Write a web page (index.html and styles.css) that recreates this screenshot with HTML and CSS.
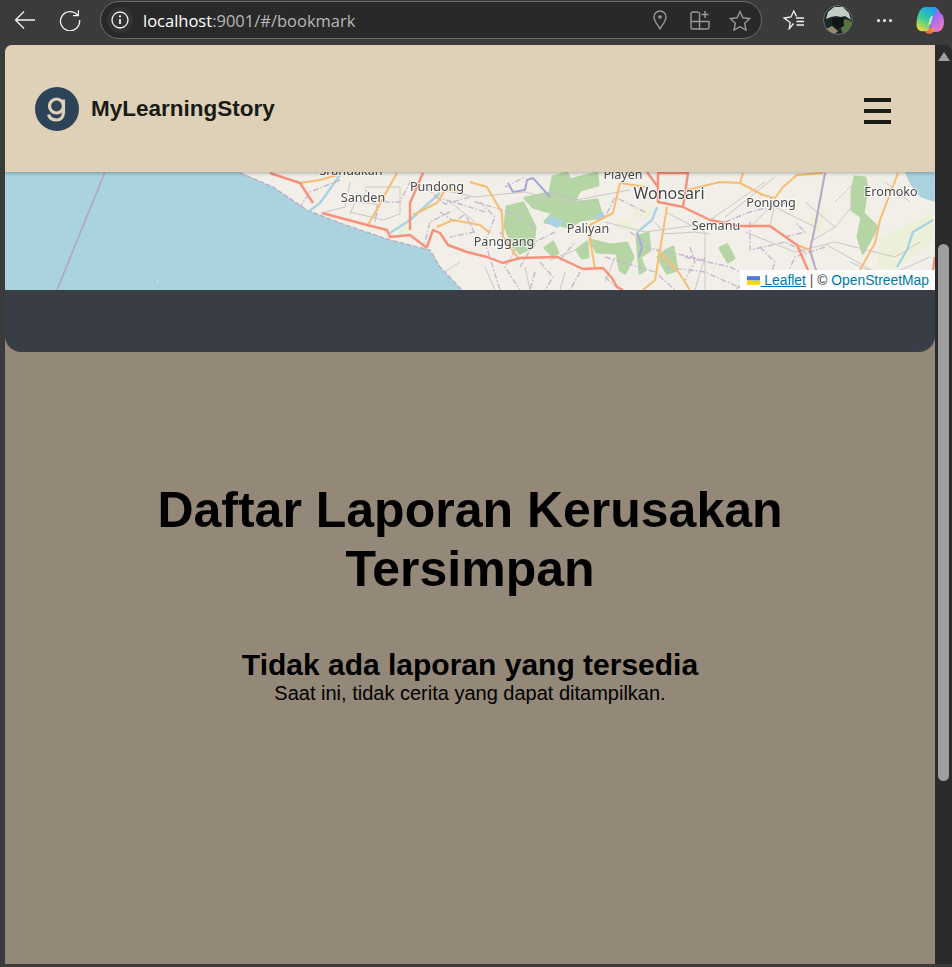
FILE: index.html
```html
<!DOCTYPE html>
<html lang="id">
<head>
    <meta charset="UTF-8">
    <meta name="viewport" content="width=device-width, initial-scale=1.0">
    <title>MyLearningStory</title>
    <link rel="stylesheet" href="styles.css">
</head>
<body>
    <div class="toolbar">
        <div class="tool back">
            <svg width="22" height="20" viewBox="0 0 22 20"><path d="M21 10H1.5M10 1.5 1.5 10l8.5 8.5" class="ico-white"/></svg>
        </div>
        <div class="tool reload">
            <svg width="22" height="22" viewBox="0 0 22 22"><path d="M18.6 6.2A9.6 9.6 0 1 0 20.6 11M19.4 1.2v5.4h-5.4" class="ico-white"/></svg>
        </div>
        <div class="urlbar">
            <div class="info">
                <svg width="18" height="18" viewBox="0 0 18 18"><circle cx="9" cy="9" r="8" class="ico-white"/><path d="M9 8v5" class="ico-white ico-thick"/><circle cx="9" cy="5.3" r="1.1" fill="#fff"/></svg>
            </div>
            <span class="url"><span class="host">localhost</span>:9001/#/bookmark</span>
            <div class="url-icons">
                <div class="url-icon">
                    <svg width="14" height="20" viewBox="0 0 14 20"><path d="M7 18.8C4 14 1 11 1 7a6 6 0 0 1 12 0c0 4-3 7-6 11.8z" class="ico-grey"/><circle cx="7" cy="7" r="1.8" fill="#9a9a9a"/></svg>
                </div>
                <div class="url-icon">
                    <svg width="20" height="20" viewBox="0 0 20 20"><path d="M8.5 2H2.8A1.8 1.8 0 0 0 1 3.800V17.200A1.800 1.800 0 0 0 2.800 19h14.400a1.800 1.800 0 0 0 1.800-1.800V11.500H1M9.500 2v17" class="ico-grey"/><path d="M15 1v7M11.500 4.500h7" class="ico-grey"/></svg>
                </div>
                <div class="url-icon">
                    <svg width="22" height="21" viewBox="0 0 22 21"><path d="m11 1.500 2.900 6.300 6.800.8-5 4.700 1.300 6.800-6-3.400-6 3.400 1.300-6.800-5-4.700 6.800-.8z" class="ico-grey"/></svg>
                </div>
            </div>
        </div>
        <div class="tool favs">
            <svg width="22" height="20" viewBox="0 0 22 20"><path d="M10.500 13.500 6.200 18.800l1-6.300-6-4.500 6.800-1L10.800 1l2.800 5.500" class="ico-white"/><path d="M13 8h8M13.500 11.500H21M13.500 15H21" class="ico-white"/></svg>
        </div>
        <div class="tool avatar-wrap">
            <svg class="avatar" width="30" height="30" viewBox="0 0 30 30">
                <circle cx="15" cy="15" r="15" fill="#1d2626"/>
                <path d="M22 14l6 2 1 3-4 7-5 3-3-8z" fill="#56743f"/>
                <path d="M3 14 5 7l6-5 9 0 6 6 2 7-6-4-4 1-5-1-5 1z" fill="#c3cbc5"/>
                <path d="M9 13l11 0 1 8-6 3-5-3z" fill="#0e1418"/>
                <path d="M3 24l6-3 6 5-3 3-5-2z" fill="#97896f"/>
                <circle cx="15" cy="15" r="14.500" fill="none" stroke="#6d7373"/>
            </svg>
        </div>
        <div class="tool dots"><span></span><span></span><span></span></div>
        <div class="tool copilot">
            <svg width="28" height="28" viewBox="0 0 28 28">
                <defs>
                    <linearGradient id="cpA" x1="0.7" y1="0" x2="0.2" y2="1"><stop offset="0" stop-color="#1f9ff0"/><stop offset=".5" stop-color="#35cc9a"/><stop offset="1" stop-color="#f4d93a"/></linearGradient>
                    <linearGradient id="cpB" x1="0.2" y1="0" x2="0.8" y2="1"><stop offset="0" stop-color="#3f7ef0"/><stop offset=".45" stop-color="#ae6bee"/><stop offset="1" stop-color="#f47bb4"/></linearGradient>
                    <linearGradient id="cpC" x1="0" y1="0" x2="1" y2="0"><stop offset="0" stop-color="#f0483c"/><stop offset="1" stop-color="#f79a4c"/></linearGradient>
                </defs>
                <path d="M15 1h3c3 0 5 3 6 6 3 1 4 5 4 9 0 6-3 10-8 10h-6z" fill="url(#cpB)"/>
                <path d="M9 22h10l-2 4c-.8 1.200-2 1.800-3.500 1.800H12c-2 0-3.500-1.800-3-5.800z" fill="url(#cpC)"/>
                <path d="M9 1h9c1.800 0 2.500 1 2 2.500L13 23c-.6 1.500-2 2.200-3.500 2.200H6c-3.500 0-5.500-3-5.500-7C.5 10 4 1 9 1z" fill="url(#cpA)"/>
                <path d="M17 9.500 14.500 18l-2.500 1 2.300-8z" fill="#fbe9e0" opacity=".8"/>
            </svg>
        </div>
    </div>

    <div class="window">
        <div class="page">
            <header class="app-bar">
                <div class="brand">
                    <svg class="logo" width="44" height="44" viewBox="0 0 44 44">
                        <circle cx="22" cy="22" r="22" fill="#2d4358"/>
                        <circle cx="21.500" cy="19" r="7" class="logo-line"/>
                        <path d="M28.500 12.500v13M13.500 27.500c1 3.500 4 5.500 8 5.500s6.700-2.500 7-7.500" class="logo-line"/>
                    </svg>
                    <span class="brand-name">MyLearningStory</span>
                </div>
                <button class="menu" aria-label="Menu"><span></span><span></span><span></span></button>
            </header>

            <section class="hero">
                <div class="map">
                    <svg class="map-tiles" width="930" height="118" viewBox="0 0 930 118">
                        <rect width="930" height="118" fill="#f2efe9"/>
                        <path d="M0 0H235L268 15 302 38 335 51 385 68 425 78 435 95 457 118H0z" fill="#aad3df"/>
                        <path d="M100 0 52 118" class="border"/>
                        <path d="M235 1 268 15 302 38 335 51 385 68 425 78 435 95 457 118" class="coast"/>
                        <rect x="152" y="109" width="1" height="1" fill="#fff"/>

                        <!-- lahan -->
                        <path d="M392 55 405 52 405 62 392 63zM628 36 648 34 645 45 630 46zM612 48 628 47 628 58 614 58zM875 65 928 40 928 70 890 98 872 95z" class="forest-light"/>
                        <path d="M805 45 822 36 815 58 806 60z" class="forest-light"/>

                        <!-- hutan -->
                        <path d="M502 35 518 31 530 55 528 75 515 81 508 73 500 55z" class="forest"/>
                        <path d="M548 5 562 1 565 8 592 1 593 13 575 18 568 31 592 28 595 38 598 45 575 48 565 55 540 50 548 41 528 35 520 26 545 21z" class="forest"/>
                        <path d="M585 68 605 73 622 71 628 85 620 101 615 98 612 81 592 80z" class="forest"/>
                        <path d="M540 76 548 70 553 81 547 83z" class="forest"/>
                        <path d="M572 78 582 70 583 85 577 86z" class="forest"/>
                        <path d="M632 65 643 61 645 78 635 85 640 98 635 101z" class="forest"/>
                        <path d="M662 78 668 75 672 98 662 101 653 85z" class="forest"/>
                        <path d="M715 76 722 73 729 86 723 90z" class="forest"/>
                        <path d="M850 5 860 6 862 18 858 41 872 55 865 68 858 81 853 65 857 45 847 38 847 18z" class="forest"/>

                        <!-- air -->
                        <path d="M900 0H930V30L915 25 905 12z" fill="#aad3df"/>
                        <path d="M540 50 552 56 560 50 545 44zM590 44 598 40 600 46 592 50z" fill="#a9d3e2"/>
                        <path d="M335 3 315 31 303 40M435 21 405 48 385 61M652 35 647 48 635 58 632 61M928 48 908 60 902 78 892 95" class="river"/>
                        <path d="M503 11 508 20 520 18 522 8 528 6 537 16 545 25M632 61 637 75 634 85" class="river-deep"/>

                        <!-- jalan kecil -->
                        <path d="M345 10 340 35 320 40M360 15 395 15 395 42 378 48 345 40M345 42 350 30 372 32 370 50M410 12 470 25 520 20 560 30 625 18M445 30 470 50M520 95 525 118M560 100 555 118M600 50 640 60 700 52M660 40 700 60 700 118M705 48 760 10M720 45 770 5M740 60 790 80 830 70 890 85 915 70M770 30 745 55M800 30 830 55 805 70M820 72 870 100M545 88 590 70M440 100 455 90M770 35 810 55M830 30 850 10M830 55 855 25M845 90 880 105 925 85M480 95 490 118M600 110 610 85M650 50 660 62 690 60 705 62M700 85 690 118M765 54 770 30M880 10 905 30" class="road-minor"/>
                        <!-- batas wilayah -->
                        <path d="M335 8 305 20 295 35M360 18 375 30 395 30 405 10M375 30 370 48M430 25 455 32 480 40M445 40 425 50 420 70M470 60 445 65M475 30 490 45 480 70 495 118M530 100 525 118M555 88 570 70M575 100 565 118M600 105 615 118M640 40 610 25 600 45M625 60 640 70M660 95 700 100 740 118M720 50 745 40 785 30M745 50 745 78 780 70 800 80M820 75 790 85 775 118M500 15 520 5M545 20 580 30M680 85 725 95M470 30 505 40 530 55M435 40 450 50 460 42 470 62M420 15 440 32 465 25M495 60 510 78 500 95 515 118M535 90 548 105 540 118M600 85 650 100 670 118M640 75 700 88M755 75 770 90 760 118M780 65 800 60 790 50M685 75 690 90 680 108M725 95 745 105 730 118M550 60 530 70 515 95" class="admin"/>
                        <path d="M820 1 810 55 805 78 810 95 818 117" class="admin-wide"/>

                        <!-- jalan provinsi -->
                        <path d="M295 11 315 8 332 3M392 1 363 53M408 43 432 31 442 15 455 20M432 55 448 48 475 53 485 61M465 10 482 15 497 41 498 65 513 86M615 11 608 41 585 53 585 68 590 96M662 35 650 108 638 118M652 78 672 98 685 118M682 18 715 10 735 11 758 23 770 26 778 15 792 3 818 1M738 1 735 11M893 1 875 48 870 71 855 98M792 73 805 78M615 11 640 15" class="road-yellow"/>
                        <!-- jalan utama -->
                        <path d="M265 1 295 11 308 31M317 41 362 53 382 58 385 65 405 63 422 76M405 58 405 31 418 1M422 75 428 58 435 61 443 73 462 80 482 85 498 91 515 86 552 85 578 97 598 96 607 106 612 115 618 118M642 0 653 15 653 30 678 35 705 48 735 54 765 54 792 73 803 98 805 117M653 15 653 1 683 1 678 35M930 85 925 118" class="road-main"/>

                        <text x="346" y="3" class="label">Srandakan</text>
                        <text x="358" y="30" class="label">Sanden</text>
                        <text x="432" y="19" class="label">Pundong</text>
                        <text x="618" y="7" class="label">Playen</text>
                        <text x="664" y="27" class="label label-big">Wonosari</text>
                        <text x="766" y="35" class="label">Ponjong</text>
                        <text x="711" y="58" class="label">Semanu</text>
                        <text x="583" y="61" class="label">Paliyan</text>
                        <text x="499" y="74" class="label">Panggang</text>
                        <text x="886" y="24" class="label">Eromoko</text>
                    </svg>
                    <div class="attribution">
                        <a href="#"><svg class="flag" width="13" height="9" viewBox="0 0 12 8"><rect width="12" height="4" fill="#4c7be1"/><rect y="4" width="12" height="4" fill="#ffd500"/></svg> Leaflet</a>
                        <span class="sep">|</span> © <a href="#" class="plain">OpenStreetMap</a>
                    </div>
                </div>
                <div class="hero-foot"></div>
            </section>

            <main class="content">
                <h1>Daftar Laporan Kerusakan Tersimpan</h1>
                <h2>Tidak ada laporan yang tersedia</h2>
                <p>Saat ini, tidak cerita yang dapat ditampilkan.</p>
            </main>
        </div>

        <div class="scrollbar">
            <div class="scroll-up"></div>
            <div class="scroll-thumb"></div>
        </div>
    </div>
</body>
</html>
```

FILE: styles.css
```css
* {
    box-sizing: border-box;
}
html, body {
    margin: 0;
    height: 100%;
}
body {
    display: flex;
    flex-direction: column;
    height: 967px;
    overflow: hidden;
    background-color: #3b3b3b;
    font-family: "Liberation Sans", Arial, sans-serif;
    color: #000;
}

/* browser */
.toolbar {
    display: flex;
    align-items: stretch;
    height: 45px;
    padding: 1px 0 6px;
    flex: none;
}
.tool {
    display: flex;
    align-items: center;
    justify-content: center;
    flex: none;
}
.back { width: 50px; }
.reload { width: 40px; }
.favs { width: 44px; margin-left: 10px; }
.avatar-wrap { width: 44px; }
.dots { width: 48px; gap: 3px; }
.copilot { width: 44px; }
.dots span {
    width: 3px;
    height: 3px;
    border-radius: 50%;
    background-color: #fff;
}
.avatar {
    margin-top: -1px;
    filter: blur(0.4px);
}
.ico-white, .ico-grey {
    fill: none;
    stroke: #f2f2f2;
    stroke-width: 1.3;
}
.ico-grey {
    stroke: #9a9a9a;
    stroke-width: 1.4;
}
.ico-thick {
    stroke-width: 1.8;
}
.urlbar {
    display: flex;
    align-items: center;
    width: 662px;
    margin-left: 10px;
    padding: 0 1px 0 6px;
    background-color: #292929;
    border: 1px solid #6a6a6a;
    border-radius: 19px;
}
.info {
    display: flex;
    align-items: center;
    justify-content: center;
    width: 26px;
    height: 26px;
    background-color: #333;
    border-radius: 50%;
}
.url {
    margin-left: 10px;
    font-family: "Open Sans", sans-serif;
    font-size: 16.5px;
    color: #b8b8b8;
}
.host {
    color: #fff;
}
.url-icons {
    display: flex;
    margin-left: auto;
}
.url-icon {
    display: flex;
    align-items: center;
    justify-content: center;
    width: 40px;
}

.window {
    display: flex;
    flex: 1;
    min-height: 0;
    padding: 0 0 3px 5px;
}
.page {
    flex: 1;
    min-width: 0;
    background-color: #948979;
    border-top-left-radius: 7px;
    overflow: hidden;
}
.scrollbar {
    display: flex;
    flex-direction: column;
    align-items: center;
    width: 17px;
    background-color: #2b2b2b;
    border-top-right-radius: 7px;
}
.scroll-up {
    width: 0;
    height: 0;
    margin-top: 7px;
    border-left: 6px solid transparent;
    border-right: 6px solid transparent;
    border-bottom: 9px solid #a0a0a0;
}
.scroll-thumb {
    width: 11px;
    height: 537px;
    margin-top: 183px;
    background-color: #9f9f9f;
    border-radius: 6px;
}

/* app */
.app-bar {
    position: relative;
    z-index: 2;
    display: flex;
    align-items: center;
    justify-content: space-between;
    height: 127px;
    padding: 0 44px 0 30px;
    background-color: #dfd0b8;
    box-shadow: 0 1px 4px rgba(0, 0, 0, 0.3);
}
.brand {
    display: flex;
    align-items: center;
    gap: 12px;
}
.logo {
    display: block;
}
.logo-line {
    fill: none;
    stroke: #dfd0b8;
    stroke-width: 3.2;
}
.brand-name {
    font-size: 22.5px;
    font-weight: bold;
    color: #181c14;
}
.menu {
    display: flex;
    flex-direction: column;
    gap: 7px;
    width: 27px;
    margin-top: 4px;
    padding: 0;
    border: none;
    background: none;
}
.menu span {
    height: 4px;
    background-color: #181c14;
}

.map {
    position: relative;
    height: 118px;
    overflow: hidden;
}
.map-tiles {
    display: block;
    filter: blur(0.6px);
}
.border, .coast, .river, .river-deep, .road-minor, .admin, .admin-wide, .road-yellow, .road-main {
    fill: none;
    stroke-linejoin: round;
}
.border { stroke: #b5a6bf; stroke-width: 1.6; }
.coast { stroke: #b7a9c0; stroke-width: 1.2; stroke-dasharray: 5 2; }
.river { stroke: #a9d3e2; stroke-width: 2.4; }
.river-deep { stroke: #a3a9d4; stroke-width: 2; }
.road-minor { stroke: #cbc8c4; stroke-width: 1; }
.admin { stroke: #c8b8d0; stroke-width: 1.4; stroke-dasharray: 6 2 1.5 2; }
.admin-wide { stroke: #b7a6c4; stroke-width: 2; }
.road-yellow { stroke: #f7bd74; stroke-width: 2; }
.road-main { stroke: #f9907a; stroke-width: 2.4; }
.forest {
    fill: #b5d5a5;
    stroke: #b5d5a5;
    stroke-width: 3;
    stroke-linejoin: round;
}
.forest-light { fill: #edf0d8; }
.label {
    font-family: "Noto Sans", "Open Sans", sans-serif;
    font-size: 12.6px;
    fill: #484848;
    text-anchor: middle;
    stroke: rgba(255, 255, 255, 0.75);
    stroke-width: 2px;
    paint-order: stroke;
}
.label-big {
    font-size: 16px;
    fill: #444;
}
.attribution {
    position: absolute;
    right: 0;
    bottom: 0;
    padding: 0 6px 0 7px;
    height: 20px;
    line-height: 20px;
    background-color: rgba(255, 255, 255, 0.92);
    font-size: 13.85px;
    color: #333;
}
.attribution a {
    color: #0078a8;
}
.attribution a.plain {
    text-decoration: none;
}
.sep {
    color: #555;
}
.flag {
    display: inline-block;
}
.hero-foot {
    height: 62px;
    background-color: #393e46;
    border-radius: 0 0 16px 16px;
}

.content {
    padding-top: 129px;
    text-align: center;
}
h1 {
    max-width: 700px;
    margin: 0 auto;
    font-size: 50px;
    line-height: 59px;
}
h2 {
    margin: 49px 0 0;
    font-size: 30px;
    line-height: 34px;
}
p {
    margin: 0;
    font-size: 20px;
    line-height: 23px;
}
```
